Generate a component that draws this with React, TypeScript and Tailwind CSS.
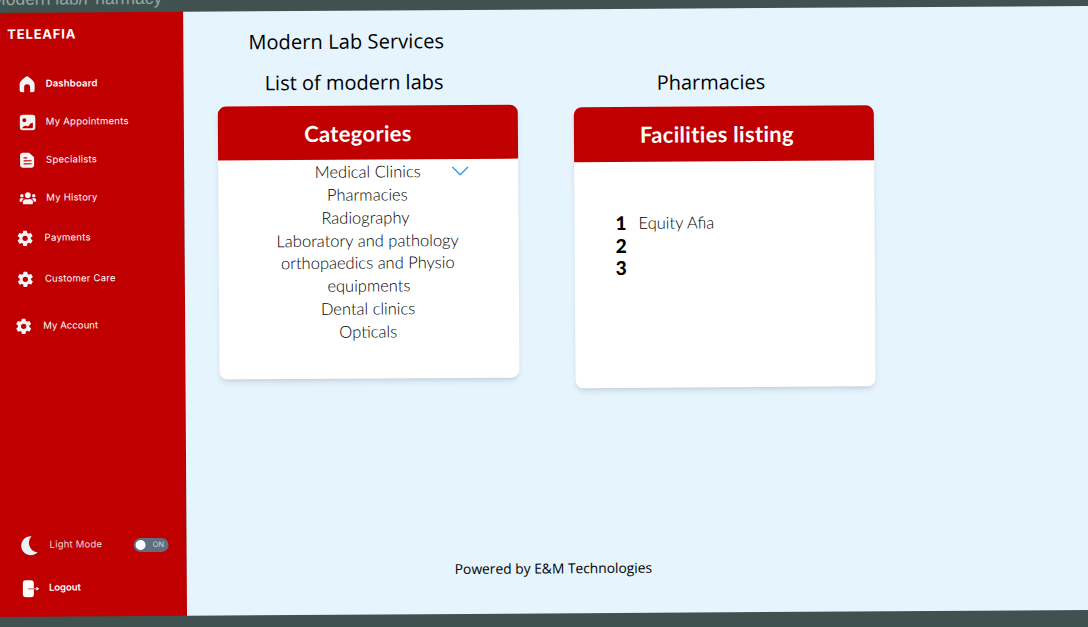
import { FaUsers } from "react-icons/fa";
import { IoSettingsSharp } from "react-icons/io5";
import { ChevronDown } from "lucide-react";

const navItems = [
  { label: "Dashboard", icon: "home", rowClass: "h-[38px] pl-[18px] gap-[10px]", textClass: "font-semibold tracking-[0.2px]" },
  { label: "My Appointments", icon: "image", rowClass: "h-[38px] pl-[18px] gap-[10px]", textClass: "tracking-[0.25px]" },
  { label: "Specialists", icon: "file", rowClass: "h-[38px] pl-[18px] gap-[10px]", textClass: "tracking-[0.25px]" },
  { label: "My History", icon: "users", rowClass: "h-[38px] pl-[18px] gap-[10px]", textClass: "tracking-[0.25px]" },
  { label: "Payments", icon: "gear", rowClass: "h-[41px] pl-[15px] gap-[11px]", textClass: "tracking-[0.25px]" },
  { label: "Customer Care", icon: "gear", rowClass: "h-[41px] pl-[15px] gap-[11px]", textClass: "tracking-[0.25px]" },
  { label: "My Account", icon: "gear", rowClass: "h-[53px] pl-[13px] gap-[11px]", textClass: "tracking-[0.1px]" },
];

const categories = [
  { label: "Medical Clinics", className: "pr-[1px]" },
  { label: "Pharmacies", className: "pr-[2px]" },
  { label: "Radiography", className: "pr-[6px]" },
  { label: "Laboratory and pathology", className: "pr-[2px]" },
  { label: "orthopaedics and Physio", className: "pr-[2px]" },
  { label: "equipments", className: "" },
  { label: "Dental clinics", className: "pr-[2px]" },
  { label: "Opticals", className: "pr-[2px]" },
];

function NavIcon({ name }: { name: string }) {
  if (name === "users") return <FaUsers className="size-[17px] text-[#f4f4f4]" />;
  if (name === "gear") return <IoSettingsSharp className="size-[17px] text-[#f4f4f4]" />;
  if (name === "home")
    return (
      <svg viewBox="0 0 17 17" className="size-[17px]">
        <path
          d="M8.500 .500c1 0 7.500 5 7.500 7.500v6.500a2 2 0 0 1-2 2h-2.500v-5a3 3 0 0 0-6 0v5H3a2 2 0 0 1-2-2V8C1 5.500 7.500 .500 8.500 .500z"
          fill="#f4f4f4"
        />
      </svg>
    );
  if (name === "image")
    return (
      <svg viewBox="0 0 17 17" className="size-[17px]">
        <rect x="1" y="1" width="15.500" height="15.500" rx="3" fill="#f4f4f4" />
        <circle cx="5.500" cy="6.500" r="2" fill="#c00000" />
        <path d="M3 14.500c2-3 4-3 5.500-2s2.500-4 5.500-3.500v4.500a1 1 0 0 1-1 1z" fill="#c00000" />
      </svg>
    );
  return (
    <svg viewBox="0 0 17 17" className="size-[17px]">
      <path
        d="M4 1h6l5 4.500V13a3 3 0 0 1-3 3H4a3 3 0 0 1-3-3V4a3 3 0 0 1 3-3z"
        fill="#f4f4f4"
      />
      <path d="M4.500 6h3.500M4.500 9h8M4.500 12h8" stroke="#c00000" strokeWidth="1.200" />
    </svg>
  );
}

function Sidebar() {
  return (
    <aside className="flex h-full w-[189px] shrink-0 flex-col bg-[#c00000] pl-[6px] font-['Inter'] text-white">
      <div className="pl-[7px] pt-[12px] text-[13px] font-bold tracking-[0.8px]">TELEAFIA</div>
      <nav className="mt-[21px] flex flex-col text-[9.5px]">
        {navItems.map((item) => (
          <div key={item.label} className={`flex items-center ${item.rowClass}`}>
            <NavIcon name={item.icon} />
            <span className={item.textClass}>{item.label}</span>
          </div>
        ))}
      </nav>
      <div className="mt-auto pb-[7px]">
        <div className="flex h-[43px] items-center pl-[15px]">
          <svg viewBox="0 0 20 20" className="size-[20px]">
            <path d="M13 .500A9.500 9.500 0 1 0 19 16.500 9.500 9.500 0 0 1 13 .500z" fill="#eef2f5" />
          </svg>
          <span className="ml-[11px] text-[9.5px] tracking-[0.2px] text-[#f3d9d9]">Light Mode</span>
          <div className="ml-[31px] flex h-[14px] w-[35px] items-center justify-between rounded-full bg-[#5f6f7d] px-[2px]">
            <span className="size-[10px] rounded-full bg-white" />
            <span className="pr-[2px] text-[7.5px] text-[#d5dade]">ON</span>
          </div>
        </div>
        <div className="flex h-[43px] items-center gap-[9px] pl-[18px]">
          <svg viewBox="0 0 18 18" className="size-[18px]">
            <rect x="1" y="0.500" width="11" height="17" rx="3" fill="#ffffff" />
            <path d="M6 9h9" stroke="#d08080" strokeWidth="1.300" />
            <path d="M14.500 7l3 2-3 2z" fill="#ffffff" />
          </svg>
          <span className="text-[9.5px] font-semibold">Logout</span>
        </div>
      </div>
    </aside>
  );
}

function CardHeader({ title, className }: { title: string; className: string }) {
  return (
    <div className={`flex items-center justify-center rounded-t-lg bg-[#c00000] font-['Lato'] text-[22px] font-bold tracking-[0.3px] text-white ${className}`}>
      {title}
    </div>
  );
}

export default function App() {
  return (
    <div className="h-[627px] w-[1088px] overflow-hidden bg-[#3f524f]">
      <div className="ml-[-6px] mt-[-10px] w-[1116px] origin-top-left rotate-[-0.37deg]">
        <div className="flex h-[23px] items-center font-['Liberation_Sans',sans-serif] text-[17.500px] leading-none text-[#98a5a3]">
          <span className="ml-[-3px] mt-[-3px]">Modern lab/Pharmacy</span>
        </div>
        <div className="relative flex h-[604px]">
          <Sidebar />
          <main className="flex flex-1 flex-col bg-[#e6f4fe] text-black">
            <h1 className="pl-[65px] pt-[17px] font-['Open_Sans'] text-[20px] font-medium leading-[28px] tracking-[0.1px]">Modern Lab Services</h1>
            <div className="mt-[14px] flex items-start gap-[56px] pl-[34px]">
              <section className="w-[300px]">
                <h2 className="mt-[-1px] pl-[47px] font-['Open_Sans'] text-[20px] font-medium leading-[28px]">List of modern labs</h2>
                <div className="mt-[9px] h-[273px] rounded-lg bg-white shadow-md">
                  <CardHeader title="Categories" className="h-[54px] pr-[20px]" />
                  <ul className="relative pt-[1px] text-center font-['Lato'] text-[16.500px] font-light leading-[22.850px] text-black">
                    {categories.map((c) => (
                      <li key={c.label} className={c.className}>{c.label}</li>
                    ))}
                    <ChevronDown className="absolute right-[43px] top-[-3px] size-[30px] text-[#3b9cf0]" strokeWidth={1.200} />
                  </ul>
                </div>
              </section>
              <section className="w-[300px]">
                <h2 className="mt-[1px] pl-[83px] font-['Open_Sans'] text-[20px] font-medium leading-[28px]">Pharmacies</h2>
                <div className="mt-[10px] h-[281px] rounded-lg bg-white shadow-md">
                  <CardHeader title="Facilities listing" className="h-[55px] pr-[14px]" />
                  <ol className="pl-[41px] pt-[50px] font-['Lato'] text-[16.500px]">
                    <li className="flex h-[22.500px] items-center gap-[13px]">
                      <b className="w-[10px] text-[19px] font-black">1</b>
                      <span className="font-light">Equity Afia</span>
                    </li>
                    <li className="flex h-[22.500px] items-center"><b className="text-[19px] font-black">2</b></li>
                    <li className="flex h-[22.500px] items-center"><b className="text-[19px] font-black">3</b></li>
                  </ol>
                </div>
              </section>
            </div>
            <footer className="mt-auto pb-[34px] pl-[268px] font-['Open_Sans'] text-[13.800px] font-medium">
              Powered by E&amp;M Technologies
            </footer>
          </main>
          <div className="absolute left-[1093px] top-[287px] h-[78px] w-[2px] bg-[#b9c2c9]" />
        </div>
      </div>
    </div>
  );
}
